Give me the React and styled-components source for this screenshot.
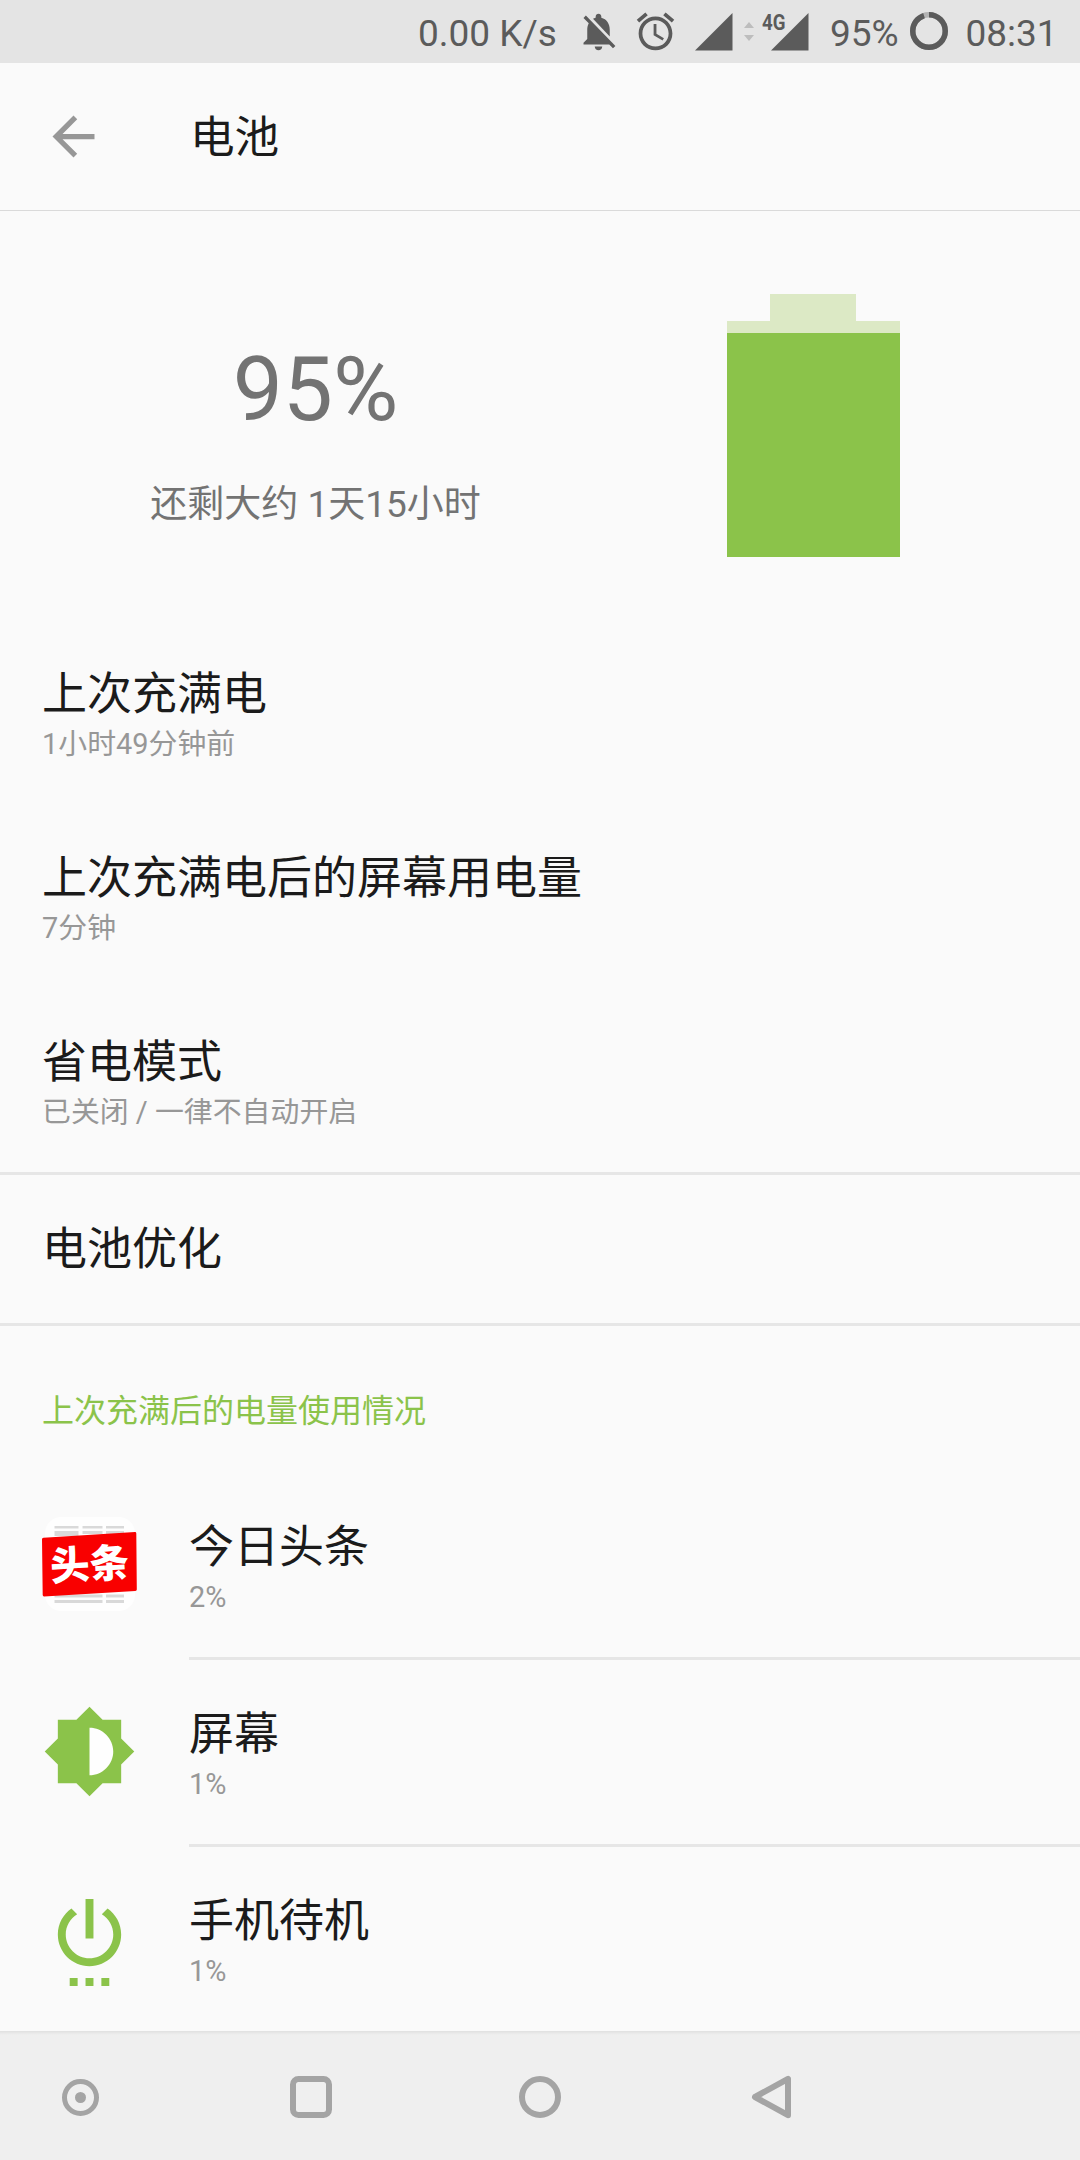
import React from 'react';
import styled, { createGlobalStyle } from 'styled-components';

const green = '#8bc34a';
const statusInk = '#5b5b5b';
const navInk = '#a4a4a4';

const GlobalStyle = createGlobalStyle`
  * { box-sizing: border-box; }
  body {
    margin: 0;
    background: #fafafa;
    font-family: Roboto, "Noto Sans CJK SC", sans-serif;
    -webkit-font-smoothing: antialiased;
  }
  svg { display: block; flex: none; }
`;

const Screen = styled.div`
  width: 1080px;
  height: 2160px;
  display: flex;
  flex-direction: column;
  overflow: hidden;
  background: #fafafa;
`;

const StatusBar = styled.div`
  height: 63px;
  flex: none;
  display: flex;
  align-items: flex-start;
  padding: 9px 0 0 418px;
  background: #e4e4e4;
  color: ${statusInk};
  fill: ${statusInk};
`;

const StatusText = styled.span`
  width: ${(p) => p.$width}px;
  margin-left: ${(p) => p.$gap || 0}px;
  margin-top: 3px;
  font-size: 37px;
  line-height: 43px;
  white-space: nowrap;
`;

const StatusIcon = styled.span`
  display: flex;
  margin-left: ${(p) => p.$gap}px;
  margin-top: ${(p) => p.$drop || 0}px;
`;

const MobileSignal = styled(StatusIcon)`
  position: relative;
`;

const NetworkType = styled.span`
  position: absolute;
  left: -9.5px;
  top: -4px;
  font-size: 22.5px;
  line-height: 26px;
  font-weight: 700;
  transform: scaleX(0.83);
  transform-origin: left center;
`;

const Header = styled.header`
  height: 148px;
  flex: none;
  display: flex;
  align-items: center;
  padding-left: 42px;
  border-bottom: 1px solid #dadada;
`;

const Title = styled.h1`
  margin: 0 0 0 85px;
  padding-top: 3px;
  font-size: 44.6px;
  line-height: 52px;
  font-weight: 400;
  color: #1b1b1b;
`;

const Overview = styled.section`
  height: 409px;
  flex: none;
  display: flex;
  color: #737373;
`;

const Estimate = styled.div`
  width: 631px;
  padding-top: 126px;
  display: flex;
  flex-direction: column;
  align-items: center;
  gap: 41px;
`;

const Percent = styled.div`
  font-size: 89.25px;
  line-height: 105px;
`;

const Remaining = styled.div`
  font-size: 37px;
  line-height: 43px;
`;

const BatteryColumn = styled.div`
  width: 364px;
  padding-top: 83px;
  display: flex;
  flex-direction: column;
  align-items: center;
`;

const BatteryCap = styled.div`
  width: 86px;
  height: 27px;
  background: #dce9c5;
`;

const BatteryBody = styled.div`
  width: 173px;
  height: 236px;
  display: flex;
  flex-direction: column;
  justify-content: flex-end;
  background: #dce9c5;
`;

const BatteryCharge = styled.div`
  height: 224.5px;
  background: ${green};
`;

const Row = styled.div`
  height: 184px;
  flex: none;
  padding: 48px 42px 0;
`;

const RowTitle = styled.div`
  font-size: 45px;
  line-height: 53px;
  color: #1b1b1b;
`;

const RowSummary = styled.div`
  margin-top: 6px;
  font-size: 28.9px;
  line-height: 34px;
  color: #979797;
`;

const Divider = styled.div`
  height: 3px;
  flex: none;
  margin-left: ${(p) => p.$inset || 0}px;
  background: #e6e6e6;
`;

const SingleRow = styled.div`
  height: 148px;
  flex: none;
  display: flex;
  align-items: center;
  padding: 1px 42px 0;
`;

const Category = styled.h2`
  height: 147px;
  flex: none;
  margin: 0;
  padding: 66px 42px 0;
  font-size: 32px;
  line-height: 38px;
  font-weight: 400;
  color: ${green};
`;

const AppRow = styled.div`
  height: 184px;
  flex: none;
  display: flex;
  padding: 44px 0 0 42px;
  gap: 52px;
`;

const AppText = styled.div`
  padding-top: 4px;
`;

const NavBar = styled.nav`
  flex: 1;
  display: flex;
  align-items: flex-start;
  gap: 188px;
  padding: 45px 0 0 60px;
  background: linear-gradient(#e0e0e0, #e8e8e8 2px, #efefef 4px);
`;

const BackIcon = () => (
  <svg width="63" height="63" viewBox="0 0 24 24" fill="#979797">
    <path d="M20 11H7.83l5.59-5.59L12 4l-8 8 8 8 1.41-1.41L7.83 13H20v-2z" />
  </svg>
);

const BellOffIcon = () => (
  <svg width="45" height="45" viewBox="0 0 24 24">
    <path d="M20 18.69L7.84 6.14 5.27 3.49 4 4.76l2.8 2.8v.01c-.52.99-.8 2.16-.8 3.42v5l-2 2v1h13.73l2 2L21 19.72l-1-1.03zM12 22c1.11 0 2-.89 2-2h-4c0 1.11.89 2 2 2zm6-7.32V11c0-3.08-1.64-5.64-4.5-6.32V4c0-.83-.67-1.5-1.5-1.5s-1.5.67-1.5 1.5v.68c-.15.03-.29.08-.42.12-.1.03-.2.07-.3.11h-.01c-.01 0-.01 0-.02.01-.23.09-.46.2-.68.31 0 0-.01 0-.01.01L18 14.68z" />
  </svg>
);

const AlarmIcon = () => (
  <svg width="45" height="45" viewBox="0 0 24 24">
    <path d="M22 5.72l-4.6-3.86-1.29 1.53 4.6 3.86L22 5.72zM7.88 3.39L6.6 1.86 2 5.71l1.29 1.53 4.59-3.85zM12.5 8H11v6l4.75 2.85.75-1.23-4-2.37V8zM12 4c-4.97 0-9 4.03-9 9s4.02 9 9 9c4.97 0 9-4.03 9-9s-4.03-9-9-9zm0 16c-3.87 0-7-3.13-7-7s3.13-7 7-7 7 3.13 7 7-3.13 7-7 7z" />
  </svg>
);

const SignalIcon = () => (
  <svg width="38" height="38" viewBox="0 0 38 38">
    <path d="M0 37.5L37.5 0v37.5z" />
  </svg>
);

const DataArrowsIcon = () => (
  <svg width="10" height="20" viewBox="0 0 10 20" fill="#bdbdbd">
    <path d="M0 6L5 0l5 6zM0 13h10l-5 6z" />
  </svg>
);

const BatteryRing = () => (
  <svg width="38" height="38" viewBox="0 0 38 38" fill="none" strokeWidth="5.5">
    <circle cx="19" cy="19" r="16.25" stroke="#b3b3b3" />
    <circle
      cx="19"
      cy="19"
      r="16.25"
      stroke={statusInk}
      pathLength="100"
      strokeDasharray="95 5"
      transform="rotate(-90 19 19)"
    />
  </svg>
);

const ToutiaoIcon = () => (
  <svg width="95" height="95" viewBox="0 0 95 95">
    <rect x="3" y="0" width="90" height="94" rx="16" fill="#fefefe" />
    <g fill="#d9d9d9">
      <path d="M12.5 9h24v2.5h-24zM40.5 9h20v2.5h-20zM64 9h18v2.5H64z" />
      <path d="M12.5 14h24v5h-24zM40.5 14h20v3h-20zM64 14h18v3H64z" />
      <path d="M12.5 77.5h48v3h-48zM64 77.5h18v3H64zM12.5 83h48v3h-48zM64 83h18v3H64z" />
    </g>
    <path
      d="M1.5 20.7L93 15.1q1.3 0 1.3 1.4l.5 56q0 1.3-1.5 1.5L2 79.5q-1.3 0-1.3-1.4L0 22.1q0-1.3 1.5-1.4z"
      fill="#f90000"
    />
    <text
      x="47.7"
      y="61.5"
      textAnchor="middle"
      fontFamily='"Noto Sans CJK SC", sans-serif'
      fontSize="39.5"
      fontWeight="900"
      fill="#fff"
      transform="rotate(-3.4 47.5 47)"
    >
      头条
    </text>
  </svg>
);

const BrightnessIcon = () => (
  <svg width="95" height="95" viewBox="0 0 24 24" fill={green}>
    <path d="M12 6v12c3.31 0 6-2.69 6-6s-2.69-6-6-6z" fill="#fefefe" />
    <path d="M20 15.31L23.31 12 20 8.69V4h-4.69L12 .69 8.69 4H4v4.69L.69 12 4 15.31V20h4.69L12 23.31 15.31 20H20v-4.69zM12 18V6c3.31 0 6 2.69 6 6s-2.69 6-6 6z" />
  </svg>
);

const StandbyIcon = () => (
  <svg width="95" height="95" viewBox="0 0 24 24" fill={green}>
    <path d="M7 24h2v-2H7v2zm4 0h2v-2h-2v2zm2-22h-2v10h2V2zm3.56 2.44l-1.45 1.45C16.84 6.94 18 8.83 18 11c0 3.31-2.69 6-6 6s-6-2.69-6-6c0-2.17 1.16-4.06 2.88-5.12L7.44 4.44C5.36 5.88 4 8.28 4 11c0 4.42 3.58 8 8 8s8-3.58 8-8c0-2.72-1.36-5.12-3.44-6.56zM15 24h2v-2h-2v2z" />
  </svg>
);

const NavIcon = ({ children }) => (
  <svg width="42" height="42" viewBox="0 0 42 42" fill="none" stroke={navInk} strokeWidth="6" overflow="visible">
    {children}
  </svg>
);

const details = [
  { title: '上次充满电', summary: '1小时49分钟前' },
  { title: '上次充满电后的屏幕用电量', summary: '7分钟' },
  { title: '省电模式', summary: '已关闭 / 一律不自动开启' },
];

const usage = [
  { title: '今日头条', share: '2%', Icon: ToutiaoIcon },
  { title: '屏幕', share: '1%', Icon: BrightnessIcon },
  { title: '手机待机', share: '1%', Icon: StandbyIcon },
];

export default function App() {
  return (
    <Screen>
      <GlobalStyle />
      <StatusBar>
        <StatusText $width={140}>0.00 K/s</StatusText>
        <StatusIcon $gap={18}><BellOffIcon /></StatusIcon>
        <StatusIcon $gap={12}><AlarmIcon /></StatusIcon>
        <StatusIcon $gap={17} $drop={4}><SignalIcon /></StatusIcon>
        <StatusIcon $gap={11} $drop={13}><DataArrowsIcon /></StatusIcon>
        <MobileSignal $gap={17} $drop={4}>
          <NetworkType>4G</NetworkType>
          <SignalIcon />
        </MobileSignal>
        <StatusText $gap={21} $width={70}>95%</StatusText>
        <StatusIcon $gap={10} $drop={3}><BatteryRing /></StatusIcon>
        <StatusText $gap={17.5} $width={100}>08:31</StatusText>
      </StatusBar>

      <Header>
        <BackIcon />
        <Title>电池</Title>
      </Header>

      <Overview>
        <Estimate>
          <Percent>95%</Percent>
          <Remaining>还剩大约 1天15小时</Remaining>
        </Estimate>
        <BatteryColumn>
          <BatteryCap />
          <BatteryBody>
            <BatteryCharge />
          </BatteryBody>
        </BatteryColumn>
      </Overview>

      {details.map((d) => (
        <Row key={d.title}>
          <RowTitle>{d.title}</RowTitle>
          <RowSummary>{d.summary}</RowSummary>
        </Row>
      ))}
      <Divider />
      <SingleRow>
        <RowTitle>电池优化</RowTitle>
      </SingleRow>
      <Divider />

      <Category>上次充满后的电量使用情况</Category>
      {usage.map(({ title, share, Icon }, i) => (
        <React.Fragment key={title}>
          {i > 0 && <Divider $inset={189} />}
          <AppRow>
            <Icon />
            <AppText>
              <RowTitle>{title}</RowTitle>
              <RowSummary>{share}</RowSummary>
            </AppText>
          </AppRow>
        </React.Fragment>
      ))}

      <NavBar>
        <NavIcon>
          <circle cx="20.5" cy="21.5" r="16" strokeWidth="5" />
          <circle cx="20.5" cy="21.5" r="5.5" fill={navInk} stroke="none" />
        </NavIcon>
        <NavIcon>
          <rect x="3" y="3" width="36" height="36" rx="5.5" />
        </NavIcon>
        <NavIcon>
          <circle cx="20" cy="21" r="18" />
        </NavIcon>
        <NavIcon>
          <path d="M5 21L38 2.8v36.4z" strokeLinejoin="round" />
        </NavIcon>
      </NavBar>
    </Screen>
  );
}
